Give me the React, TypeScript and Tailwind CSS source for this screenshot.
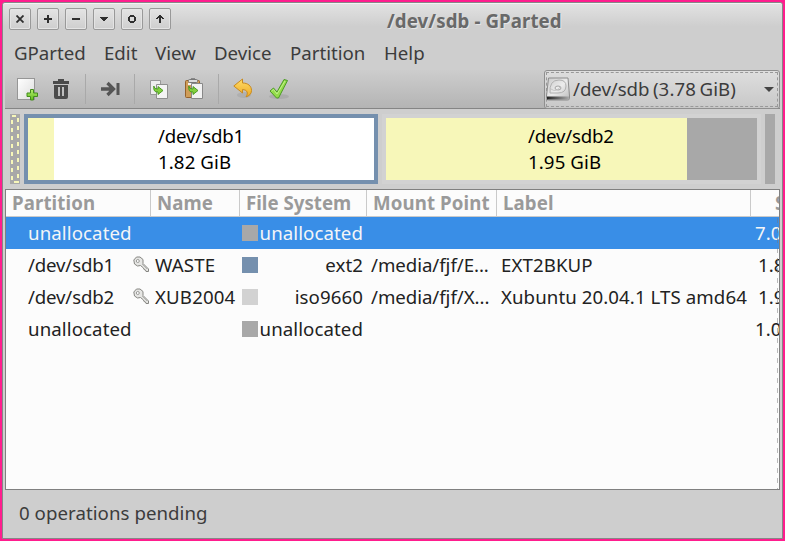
import type { ReactNode } from "react";

const ink = "#2f2f2f";

const windowGlyphs: string[] = [
  "",
  "M3 0h2v3h3v2H5v3H3V5H0V3h3z",
  "M0 3h8v2H0z",
  "M0 2h8v1H7v1H6v1H5v1H3V5H2V4H1V3H0z",
  "M2 0h4v1h1v1h1v4H7v1H6v1H2V7H1V6H0V2h1V1h1zM2 2v4h4V2z",
  "M3 0h2v1h1v1h1v1h1v1H6V3H5v5H3V3H2v1H0V3h1V2h1V1h1z",
];

function WindowButton({ index }: { index: number }) {
  return (
    <div className="flex h-[22px] w-[22px] items-center justify-center rounded-[2px] border border-[#999] bg-linear-to-b from-[#e4e4e4] to-[#cecece] shadow-[inset_0_0_0_1px_#e4e4e4]">
      {index === 0 ? (
        <svg width="8" height="8" viewBox="0 0 8 8">
          <path d="M.5.5l7 7M7.500.5l-7 7" stroke={ink} strokeWidth="1.8" />
        </svg>
      ) : (
        <svg width="8" height="8" viewBox="0 0 8 8" fill={ink} fillRule="evenodd">
          <path d={windowGlyphs[index]} />
        </svg>
      )}
    </div>
  );
}

function NewIcon() {
  return (
    <svg width="24" height="24" viewBox="0 0 24 24">
      <defs>
        <linearGradient id="page" x1="0" y1="0" x2="1" y2="1">
          <stop offset="0" stopColor="#fff" />
          <stop offset="1" stopColor="#ddd" />
        </linearGradient>
        <linearGradient id="leaf" x1="0" y1="0" x2="0" y2="1">
          <stop offset="0" stopColor="#b5ee70" />
          <stop offset="1" stopColor="#62bd19" />
        </linearGradient>
      </defs>
      <rect x="2.5" y="1.5" width="17" height="21" fill="url(#page)" stroke="#969696" />
      <path d="M15.500 12.500h3v3.500h4v3.500h-4v3.500h-3v-3.500h-3.500v-3.500h3.500z" fill="url(#leaf)" stroke="#438c1c" />
    </svg>
  );
}

function TrashIcon() {
  return (
    <svg width="18" height="21" viewBox="0 0 18 21" fill="#4b4b4b" fillRule="evenodd">
      <path d="M6 0h6v2h5v3H1V2h5zM2 6h14v12q0 2-2 2H4q-2 0-2-2zM6 8v9h2V8zm4 0v9h2V8z" />
    </svg>
  );
}

function ApplyRight() {
  return (
    <svg width="19" height="16" viewBox="0 0 19 16">
      <path d="M0 8H12M6.5 2l6 6-6 6" fill="none" stroke="#555" strokeWidth="3.3" />
      <rect x="15.5" y="2" width="3" height="12" fill="#555" />
    </svg>
  );
}

const arrowPath = "M4.800 7Q5.200 10.500 9 10V7.500l5 4-5 4V13Q4 13.500 4.800 7z";

function CopyIcon() {
  return (
    <svg width="20" height="21" viewBox="0 0 20 21">
      <path d="M1.5 1.5h10v14h-10z" fill="#eee" stroke="#999" />
      <path d="M7.5 5.5h11v14h-11z" fill="#f4f4f4" stroke="#8f8f8f" />
      <path d={arrowPath} fill="#84d03f" stroke="#43961a" strokeWidth=".9" />
    </svg>
  );
}

function PasteIcon() {
  return (
    <svg width="20" height="22" viewBox="0 0 20 22">
      <rect x="1.5" y="2.5" width="14" height="17" rx="1" fill="#cf9d58" stroke="#95612b" />
      <path d="M4 5h9v2H4z" fill="#f5f5f5" />
      <rect x="4.5" y="1.5" width="9" height="3" rx="1" fill="#ddd" stroke="#777" />
      <path d="M7 .5h4" stroke="#888" />
      <path d="M7.5 5.5h11v15h-11z" fill="#f2f2f2" stroke="#888" />
      <path d={arrowPath} transform="translate(0 1)" fill="#84d03f" stroke="#43961a" strokeWidth=".9" />
    </svg>
  );
}

function UndoIcon() {
  return (
    <svg width="20" height="22" viewBox="0 0 20 22">
      <defs>
        <linearGradient id="gold" x1="0" y1="0" x2="0" y2="1">
          <stop offset="0" stopColor="#ffdc67" />
          <stop offset="1" stopColor="#eeaa25" />
        </linearGradient>
      </defs>
      <ellipse cx="11" cy="17" rx="7" ry="3" fill="#777" opacity=".18" />
      <path d="M.8 8L9.500 1v4C15 5 18.500 8 18.500 12.500 18.500 16 16 18 13 18.800 15.200 15.500 15 12 9.500 11.500v3.500z" fill="url(#gold)" stroke="#c98a1e" strokeLinejoin="round" />
    </svg>
  );
}

function CheckIcon() {
  return (
    <svg width="22" height="22" viewBox="0 0 22 22">
      <ellipse cx="11" cy="18.500" rx="10" ry="2.500" fill="#777" opacity=".22" />
      <path d="M2 13l3.500-3 3.500 4L16 1.500l3.500 1L10.500 20H8.500z" fill="#94dc4a" stroke="#4b9a24" strokeLinejoin="round" />
      <path d="M3.500 13l2-1.500L9 16l8-13" fill="none" stroke="#c1f18b" />
    </svg>
  );
}

function DiskIcon() {
  return (
    <svg className="-ml-px -mt-px shrink-0" width="24" height="24" viewBox="0 0 24 24">
      <defs>
        <linearGradient id="metal" x1="0" y1="0" x2="1" y2="1">
          <stop offset="0" stopColor="#c9c9c9" />
          <stop offset=".5" stopColor="#ececec" />
          <stop offset="1" stopColor="#bbb" />
        </linearGradient>
        <linearGradient id="edge">
          <stop offset="0" stopColor="#222" />
          <stop offset="1" stopColor="#aaa" />
        </linearGradient>
      </defs>
      <path d="M2.500 1h19.500L23.500 19v2.500q0 1.500-2 1.500h-19Q.5 23 .5 21.500V19z" fill="url(#metal)" stroke="#8c8c8c" />
      <path d="M1 19.500h22v3H1z" fill="url(#edge)" />
      <path d="M4 16Q3 3 13 3q7 0 7 6 0 7-8 7-4 0-8 0" fill="none" stroke="#b0b0b0" />
      <ellipse cx="12" cy="11" rx="3" ry="2" fill="#ededed" stroke="#a3a3a3" />
      <path d="M5 12q5 4 10-3" fill="none" stroke="#c4c4c4" />
    </svg>
  );
}

function KeyIcon() {
  return (
    <svg className="-mt-[2px] ml-px" width="17" height="17" viewBox="0 0 17 17">
      <path d="M3.500 1h3.500l3 2.500v4l5.500 5.500v2.500h-2.500l-.5-1.500-1.500-.5-.5-1.500-3-2.500-3 .5L1.500 8 .8 4z" fill="#e6e6e4" stroke="#868682" strokeLinejoin="round" />
      <circle cx="4.800" cy="5" r="1.500" fill="#fff" stroke="#9a9a97" />
      <path d="M9 8l5 5" stroke="#b5b5b2" />
    </svg>
  );
}

function Divider() {
  return <div className="h-[30px] w-px bg-[#a9a9a9]" />;
}

function Slot({ className, children }: { className: string; children: ReactNode }) {
  return <div className={`flex shrink-0 items-center ${className}`}>{children}</div>;
}

const menus = [
  { label: "GParted", width: "w-[90px]" },
  { label: "Edit", width: "w-[51px]" },
  { label: "View", width: "w-[59px]" },
  { label: "Device", width: "w-[76px]" },
  { label: "Partition", width: "w-[94px]" },
  { label: "Help", width: "w-[50px]" },
];

const rows = [
  { name: "unallocated", nameStyle: "tracking-[0.1px]", label: "", color: "bg-[#a8a8a8]", fs: "unallocated", mount: "", volume: "", size: "7.00 MiB", sizePad: "pl-1", locked: false },
  { name: "/dev/sdb1", nameStyle: "tracking-[-0.17px]", label: "WASTE", color: "bg-[#7590ae]", fs: "ext2", mount: "/media/fjf/E...", volume: "EXT2BKUP", size: "1.82 GiB", sizePad: "pl-[7px]", locked: true },
  { name: "/dev/sdb2", nameStyle: "tracking-[-0.17px]", label: "XUB2004", color: "bg-[#d2d2d2]", fs: "iso9660", mount: "/media/fjf/X...", volume: "Xubuntu 20.04.1 LTS amd64", size: "1.95 GiB", sizePad: "pl-[7px]", locked: true },
  { name: "unallocated", nameStyle: "tracking-[0.1px]", label: "", color: "bg-[#a8a8a8]", fs: "unallocated", mount: "", volume: "", size: "1.00 MiB", sizePad: "pl-1", locked: false },
];

const headers = [
  { label: "Partition", style: "w-[145px] pl-[6px]" },
  { label: "Name", style: "w-[89px] pl-[6px]" },
  { label: "File System", style: "w-[127px] pl-[6px] tracking-[0.02px]" },
  { label: "Mount Point", style: "w-[130px] pl-[6px]" },
  { label: "Label", style: "w-[254px] pl-[6px]" },
];

export default function App() {
  return (
    <div className="h-[541px] w-[785px] overflow-hidden bg-[#ff1d8e] p-[2px] font-['Noto_Sans',sans-serif] text-[18.67px] leading-[26px] whitespace-nowrap text-[#3c3c3c]">
      <div className="flex h-[537px] w-[781px] flex-col rounded-t-[3px] border border-[#878787] bg-[#cecece]">
        <div className="flex h-[31px] shrink-0 rounded-t-[2px] border-t border-[#f4f4f4] bg-linear-to-b from-[#e2e2e2] to-[#cecece] to-75% pl-[6px]">
          <div className="flex gap-[6px] pt-1">
            {windowGlyphs.map((_, i) => (
              <WindowButton key={i} index={i} />
            ))}
          </div>
          <div className="ml-[216px] pt-1 font-bold tracking-[0.1px] text-[#696969] [text-shadow:1px_1px_0_#e5e5e5]">/dev/sdb - GParted</div>
        </div>

        <div className="flex h-9 shrink-0 items-center pt-[2px] pl-[11px]">
          {menus.map((menu) => (
            <div key={menu.label} className={menu.width}>{menu.label}</div>
          ))}
        </div>

        <div className="mx-[2px] flex h-[39px] shrink-0 items-center border-b border-[#858585] bg-linear-to-b from-[#cdcdcd] to-[#b4b4b4]">
          <Slot className="w-[47px] pl-[10px]"><NewIcon /></Slot>
          <Slot className="w-[33px]"><TrashIcon /></Slot>
          <Divider />
          <Slot className="w-12 pl-[15px]"><ApplyRight /></Slot>
          <Divider />
          <Slot className="w-9 pl-[14px]"><CopyIcon /></Slot>
          <Slot className="w-[47px] pl-[13px]"><PasteIcon /></Slot>
          <Divider />
          <Slot className="w-9 pl-[14px]"><UndoIcon /></Slot>
          <Slot className="w-[42px] pl-[13px]"><CheckIcon /></Slot>
          <div className="ml-auto flex h-[39px] w-[236px] shrink-0 items-center self-start rounded-[3px] border border-[#8f8f8f] bg-linear-to-b from-[#dedede] to-[#c8c8c8] p-px">
            <div className="flex h-[35px] w-full items-center border border-dashed border-[#999]">
              <DiskIcon />
              <span className="mb-[2px] ml-[3px] tracking-[0.1px] [word-spacing:-1.5px]"><span className="tracking-[-0.05px]">/dev/sdb</span> (3.78 GiB)</span>
              <svg className="mr-[3px] ml-auto" width="10" height="5" viewBox="0 0 10 5"><path d="M0 0h10L5 5z" fill="#444" /></svg>
            </div>
          </div>
        </div>

        <div className="flex h-20 shrink-0 pt-[5px] pl-[7px]">
          <div className="h-[70px] w-[10px] bg-[#a8a8a8]">
            <svg width="10" height="70" viewBox="0 0 10 70">
              <path d="M2 2h4M4 68h5" stroke="#f7f7b9" strokeWidth="2" />
              <path d="M2 6v60M8 4v60" stroke="#f7f7b9" strokeWidth="2" strokeDasharray="4 4" />
            </svg>
          </div>
          <div className="ml-1 flex h-[70px] w-[354px] border-4 border-[#7590ae] bg-white text-black">
            <div className="w-[26px] bg-[#f7f7b9]" />
            <div className="pt-[5px] pl-[104px]"><div className="tracking-[-0.17px]">/dev/sdb1</div><div className="tracking-[0.1px]">1.82 GiB</div></div>
          </div>
          <div className="ml-1 flex h-[70px] w-[379px] border-4 border-[#d2d2d2] bg-[#a8a8a8] text-black">
            <div className="w-[301px] bg-[#f7f7b9] pt-[5px] pl-[142px]"><div className="tracking-[-0.2px]">/dev/sdb2</div><div className="tracking-[0.1px]">1.95 GiB</div></div>
          </div>
          <div className="ml-1 h-[70px] w-[10px] bg-[#a8a8a8]" />
        </div>

        <div className="relative mx-[2px] h-[301px] shrink-0 overflow-hidden border border-[#808080] bg-[#fcfcfc] text-[#222]">
          <div className="flex h-[27px] border-b border-[#cacaca] font-bold tracking-[0.1px] text-[#9a9a9a]">
            {headers.map((header) => (
              <div key={header.label} className={`shrink-0 border-r border-[#cacaca] ${header.style}`}>{header.label}</div>
            ))}
            <div className="shrink-0 pl-[24px]">Size</div>
          </div>
          {rows.map((row, i) => (
            <div key={i} className={`flex h-8 items-center ${i === 0 ? "bg-[#398ee7] text-[#f3f5f7]" : ""}`}>
              <div className={`w-[126px] shrink-0 pl-[22px] ${row.nameStyle}`}>{row.name}</div>
              <div className="w-[23px] shrink-0">{row.locked && <KeyIcon />}</div>
              <div className="w-[87px] shrink-0 tracking-[0.15px]">{row.label}</div>
              <div className={`h-4 w-4 shrink-0 ${row.color}`} />
              <div className="w-[105px] shrink-0 text-right tracking-[0.08px]">{row.fs}</div>
              <div className="w-[138px] shrink-0 pl-2 tracking-[-0.05px]">{row.mount}</div>
              <div className="w-[250px] shrink-0 tracking-[0.08px]">{row.volume}</div>
              <div className={`shrink-0 ${row.sizePad}`}>{row.size}</div>
            </div>
          ))}
          <div className="absolute top-[28px] right-px bottom-0 w-px bg-[repeating-linear-gradient(to_bottom,#777_0px,#777_5px,transparent_5px,transparent_10px)] opacity-50" />
        </div>
        <div className="pt-[10px] pl-[16px] tracking-[0.05px]">0 operations pending</div>
      </div>
    </div>
  );
}
